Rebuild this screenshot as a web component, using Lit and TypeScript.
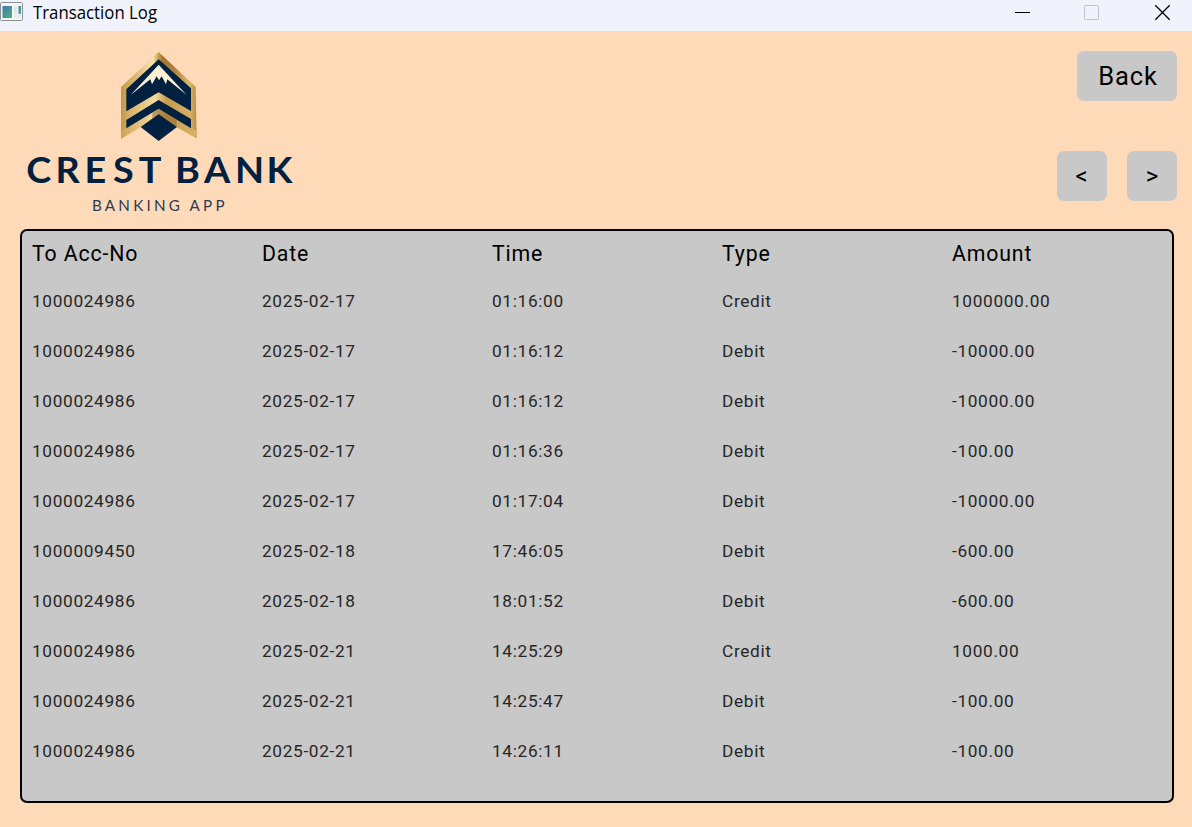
import { LitElement, html, css } from "lit";
import { customElement } from "lit/decorators.js";

const COLUMNS = ["To Acc-No", "Date", "Time", "Type", "Amount"];

const ROWS = [
  ["1000024986", "2025-02-17", "01:16:00", "Credit", "1000000.00"],
  ["1000024986", "2025-02-17", "01:16:12", "Debit", "-10000.00"],
  ["1000024986", "2025-02-17", "01:16:12", "Debit", "-10000.00"],
  ["1000024986", "2025-02-17", "01:16:36", "Debit", "-100.00"],
  ["1000024986", "2025-02-17", "01:17:04", "Debit", "-10000.00"],
  ["1000009450", "2025-02-18", "17:46:05", "Debit", "-600.00"],
  ["1000024986", "2025-02-18", "18:01:52", "Debit", "-600.00"],
  ["1000024986", "2025-02-21", "14:25:29", "Credit", "1000.00"],
  ["1000024986", "2025-02-21", "14:25:47", "Debit", "-100.00"],
  ["1000024986", "2025-02-21", "14:26:11", "Debit", "-100.00"],
];

// Left edge of each wordmark letter and the horizontal stretch applied to it.
const STRETCH = 1.05;
const at = (xs: number[]) => xs.map((x) => (x / STRETCH).toFixed(2)).join(" ");
const CREST = at([26.2, 55.4, 84.6, 113.1, 138.8]);
const BANK = at([174.9, 204.1, 235, 266.4]);

@customElement("title-bar")
class TitleBar extends LitElement {
  static styles = css`
    :host { display: flex; height: 31px; background: #f0f3fb; align-items: flex-start; }
    .app { flex: none; }
    .title { flex: 1; padding-left: 10px; }
    .label { display: block; }
    .controls { flex: none; }
  `;
  render() {
    return html`
      <svg class="app" width="23" height="31" viewBox="0 0 23 31">
        <defs>
          <linearGradient id="pane" x1="0" y1="0" x2="1" y2="1">
            <stop offset="0" stop-color="#3f78b0" /><stop offset="1" stop-color="#4fb477" />
          </linearGradient>
        </defs>
        <rect x="0.5" y="2.5" width="22" height="18" rx="1" fill="#f4f5f6" stroke="#8d9196" />
        <rect x="2.5" y="6" width="9.5" height="12" fill="url(#pane)" />
        <rect x="14" y="6" width="3" height="8" fill="#e3e5e6" />
        <rect x="18.5" y="6" width="2.5" height="8" fill="url(#pane)" />
        <rect x="14" y="15" width="7" height="3" fill="#e8eaeb" />
      </svg>
      <div class="title">
        <svg class="label" width="140" height="31">
          <text x="0" y="19" font-family="Open Sans, Noto Sans, sans-serif" font-size="17.6" textLength="124" lengthAdjust="spacingAndGlyphs">Transaction Log</text>
        </svg>
      </div>
      <svg class="controls" width="192" height="31" viewBox="1000 0 192 31" fill="none">
        <path d="M1015 12.5h15" stroke="#000" />
        <rect x="1084.5" y="5.5" width="14" height="14" rx="1" stroke="#bfc1c7" />
        <path d="M1155.3 5.3l14.4 14.4M1169.7 5.3l-14.4 14.4" stroke="#000" stroke-width="1.3" />
      </svg>
    `;
  }
}

@customElement("crest-logo")
class CrestLogo extends LitElement {
  static styles = css`
    :host { display: block; }
    .logo { display: block; }
    .name { font: 700 36px Lato, sans-serif; fill: #02203f; }
    .tag { font: 400 15.2px Lato, sans-serif; fill: #2b3a55; }
  `;
  render() {
    return html`
      <svg class="logo" width="280" height="175" viewBox="20 45 280 175">
        <defs>
          <linearGradient id="gold" x1="0" y1="0" x2="1" y2="0">
            <stop offset="0" stop-color="#c39a4c" /><stop offset="0.2" stop-color="#dcb970" />
            <stop offset="0.42" stop-color="#f7e3b0" /><stop offset="0.5" stop-color="#c59a50" />
            <stop offset="0.55" stop-color="#a3752e" />
            <stop offset="0.72" stop-color="#b08540" /><stop offset="0.9" stop-color="#dcb96e" />
            <stop offset="1" stop-color="#b98c40" />
          </linearGradient>
          <linearGradient id="band" x1="0" y1="0" x2="1" y2="0">
            <stop offset="0" stop-color="#cfa457" /><stop offset="0.45" stop-color="#f3dc9f" />
            <stop offset="0.6" stop-color="#c89c50" /><stop offset="1" stop-color="#d8b265" />
          </linearGradient>
        </defs>
        <g transform="translate(100 40) scale(.33333)">
          <path fill="url(#gold)" d="M176 36L63 141V296L122 261L176 222L230 261L290 295L287 140Z" />
          <path fill="url(#band)" d="M79 213L176 156L273 212V240L176 181L79 240ZM65 295V272L176 206L288 272V294L229 260L176 223L122 261Z" />
          <path fill="#02203f" d="M176 58L273 145V213L176 157L79 214V148Z" />
          <path fill="#02203f" d="M176 180L273 237V265L176 206L79 265V240Z" />
          <path fill="#02203f" d="M176 222L231 261L176 303L122 261Z" />
          <path fill="#8f6528" d="M176 206L230 239V261L176 223L157 236V218Z" opacity=".55" />
          <path fill="#fbefd4" d="M176 74L92 165L151 118L156 133L170 109L177 121L185 109L198 133L202 118L260 165Z" />
        </g>
        <text class="name" y="183" transform="scale(${STRETCH} 1)"><tspan x=${CREST}>CREST</tspan> <tspan x=${BANK}>BANK</tspan></text>
        <text class="tag" x="92" y="211" textLength="132.5" lengthAdjust="spacing">BANKING APP</text>
      </svg>
    `;
  }
}

@customElement("transaction-table")
class TransactionTable extends LitElement {
  static styles = css`
    :host {
      display: block; box-sizing: border-box; height: 574px; padding: 0 10px;
      background: #c8c8c8; border: 2px solid #000; border-radius: 7px;
      font-family: Roboto, sans-serif;
    }
    .row {
      display: grid; grid-template-columns: repeat(5, 230px); height: 50px; line-height: 50px;
      font-size: 17.3px; letter-spacing: 0.64px; color: #262626;
    }
    .head { height: 45px; line-height: 45px; font-size: 21.3px; letter-spacing: 0.85px; color: #000; }
  `;
  render() {
    return html`
      <div class="row head">${COLUMNS.map((c) => html`<span>${c}</span>`)}</div>
      ${ROWS.map((r) => html`<div class="row">${r.map((c) => html`<span>${c}</span>`)}</div>`)}
    `;
  }
}

@customElement("app-root")
class AppRoot extends LitElement {
  static styles = css`
    :host { display: block; height: 827px; overflow: hidden; background: #ffdab9; }
    .top { display: flex; justify-content: space-between; height: 198px; padding: 0 15px 0 20px; box-sizing: border-box; }
    .logo { margin-top: 14px; }
    .actions { display: flex; flex-direction: column; align-items: flex-end; gap: 50px; padding-top: 20px; }
    .pager { display: flex; gap: 20px; }
    .btn {
      width: 50px; height: 50px; padding: 0; border: 0; border-radius: 7px; background: #c8c8c8; color: #000;
      font: 400 24px/50px Roboto, sans-serif;
    }
    .prev { padding-right: 1px; }
    .back { width: 100px; padding-left: 2px; font-size: 25.5px; letter-spacing: 0.9px; }
    .table { margin: 0 18px 0 20px; }
  `;
  render() {
    return html`
      <title-bar></title-bar>
      <div class="top">
        <crest-logo class="logo"></crest-logo>
        <div class="actions">
          <button class="btn back">Back</button>
          <div class="pager">
            <button class="btn prev">&lt;</button>
            <button class="btn">&gt;</button>
          </div>
        </div>
      </div>
      <transaction-table class="table"></transaction-table>
    `;
  }
}
